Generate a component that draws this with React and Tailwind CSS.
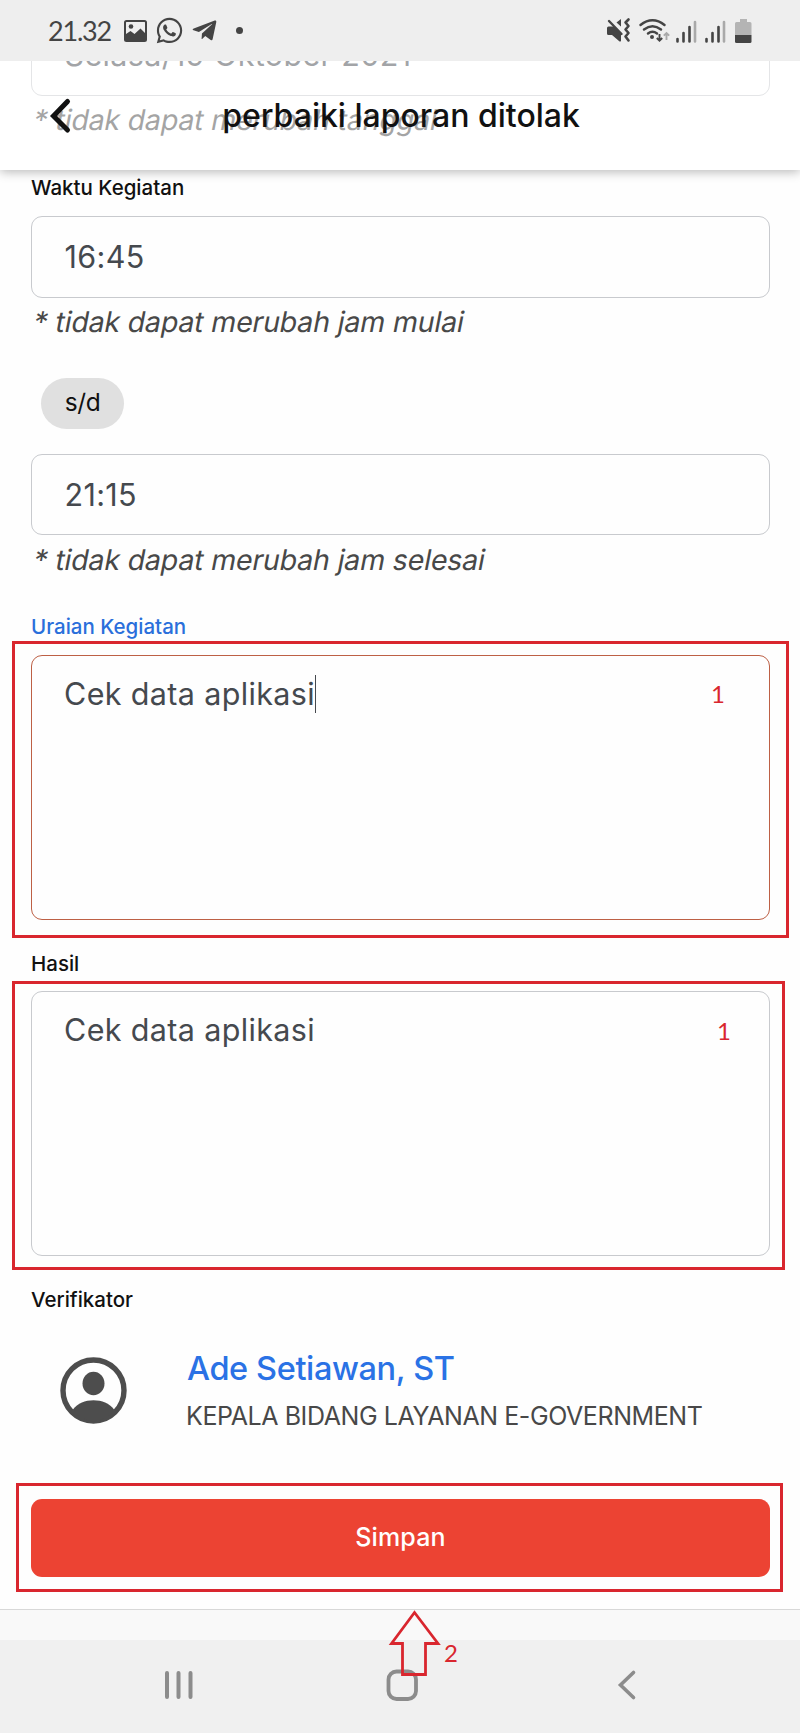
import { FaWhatsapp, FaTelegramPlane } from "react-icons/fa";

function StatusBar() {
  return (
    <div className="relative z-20 flex h-[61px] shrink-0 items-center justify-between bg-[#eeeeee] pl-[48px] pr-[40px] text-[#444444]">
      <div className="flex items-center">
        <span className="w-[76px] font-['Lato',sans-serif] text-[27px] leading-[32px] tracking-[-1.2px]">21.32</span>
        <svg className="h-[22px] w-[23px]" viewBox="0 0 23 22">
          <rect x="1" y="1" width="21" height="20" rx="1.5" fill="none" stroke="#444444" strokeWidth="2" />
          <circle cx="7" cy="6.5" r="2.3" fill="#444444" />
          <path d="M2 14l4.500-3 4 3 6-5.500L21 13v7H2z" fill="#444444" />
        </svg>
        <FaWhatsapp className="ml-[8px] h-[29px] w-[29px]" />
        <FaTelegramPlane className="ml-[7px] h-[27px] w-[27px]" />
        <span className="ml-[18px] h-[7px] w-[7px] rounded-full bg-[#444444]" />
      </div>
      <svg className="h-[61px] w-[160px]" viewBox="600 0 160 61" fill="none">
        <path d="M607 28q0-1.500 1.500-1.500h4.500l8-3.500v18q-1 1-2 0l-7-6h-3.500q-1.500 0-1.500-1.500z" fill="#444444" />
        <path d="M610 18.500l13 13.500" stroke="#eeeeee" strokeWidth="5" />
        <path d="M609 21l12.500 13" stroke="#444444" strokeWidth="2.400" strokeLinecap="round" />
        <path d="M616.500 22.500l4.500-3.500v7.500z" fill="#444444" />
        <path d="M628.500 19.500l-3 3 3 3.500-3 3.500 3 3.500-3 3.500 3 4" stroke="#444444" strokeWidth="2.600" strokeLinejoin="round" strokeLinecap="round" />
        <path d="M640.500 25q12-9.500 24 0" stroke="#444444" strokeWidth="2.500" strokeLinecap="round" />
        <path d="M644 29.500q8.500-6.500 17 0" stroke="#444444" strokeWidth="2.500" strokeLinecap="round" />
        <path d="M648 33.500q4.500-3.500 9 0" stroke="#444444" strokeWidth="2.500" strokeLinecap="round" />
        <circle cx="652" cy="37" r="2" fill="#444444" />
        <path d="M659.500 34v6.500m-2.700-2.500l2.700 2.700 2.700-2.700" stroke="#444444" strokeWidth="1.900" />
        <path d="M666.500 40v-7m-2.700 2.700l2.700-2.700 2.700 2.700" stroke="#a9a9a9" strokeWidth="1.900" />
        <path d="M677.500 39v2.500M683.500 33v8.500M689.500 27v14.500M706.500 39v2.500M712.500 33v8.500M718.500 27v14.500" stroke="#444444" strokeWidth="2.600" strokeLinecap="round" />
        <path d="M695 22v19.500M724 22v19.500" stroke="#a9a9a9" strokeWidth="2.600" strokeLinecap="round" />
        <path d="M740 19h7v3h3q1.500 0 1.500 1.500V35h-16.500V23.500q0-1.500 1.500-1.500h3.500z" fill="#b4b4b4" />
        <path d="M735 35h16.500v6.500q0 1.500-1.500 1.500h-13.500q-1.500 0-1.500-1.500z" fill="#444444" />
      </svg>
    </div>
  );
}

function Header() {
  return (
    <header className="absolute left-0 top-[61px] z-10 flex h-[109px] w-full items-center justify-center bg-white/50 shadow-[0_2px_10px_rgba(0,0,0,0.28)]">
      <svg className="absolute left-[48px] top-[36px] h-[38px] w-[26px]" viewBox="0 0 26 38" fill="none">
        <path d="M19.500 4.500L5.500 19l14 14" stroke="#111111" strokeWidth="5" strokeLinecap="round" strokeLinejoin="miter" />
      </svg>
      <h1 className="whitespace-nowrap pl-[2px] text-[32px] font-[470] leading-[40px] text-[#111111]">perbaiki laporan ditolak</h1>
    </header>
  );
}

function Label({ className, children }) {
  return <div className={"h-[30px] whitespace-nowrap text-[20.5px] font-[450] leading-[30px] " + className}>{children}</div>;
}

function Field({ className, children }) {
  return (
    <div className={"flex items-center rounded-[11px] border border-[#c8cace] pl-[32.5px] text-[30.5px] tracking-[0.35px] text-[#45494e] " + className}>
      {children}
    </div>
  );
}

function Hint({ className, children }) {
  return (
    <div className={"whitespace-nowrap pl-[3px] text-[28.5px] tracking-[-0.17px] text-[#484848] " + className}>
      <span className="inline-block -skew-x-[11deg]">{children}</span>
    </div>
  );
}

function Area({ className, children }) {
  return (
    <div className={"flex h-[265px] items-start rounded-[11px] border pl-[32px] pt-[18px] text-[30.5px] leading-[40px] tracking-[0.35px] text-[#45494e] " + className}>
      {children}
    </div>
  );
}

export default function App() {
  return (
    <div className="relative flex h-[1733px] w-[800px] flex-col overflow-hidden bg-white font-['Inter',sans-serif]">
      <StatusBar />
      <Header />

      <main className="h-[1548px] shrink-0 overflow-hidden bg-[#fefefe] pl-[31px] pr-[30px]">
        <div className="-mt-[47px] flex flex-col">
          <Field className="h-[82px]">Selasa/19 Oktober 2021</Field>
          <Hint className="h-[48px] leading-[48px]">* tidak dapat merubah tanggal</Hint>

          <Label className="mt-[29px] text-[#111111]">Waktu Kegiatan</Label>
          <Field className="mt-[13px] h-[82px]">16:45</Field>
          <Hint className="h-[48px] leading-[48px]">* tidak dapat merubah jam mulai</Hint>
          <div className="ml-[10px] mt-[32px] flex h-[51px] w-[83px] items-center justify-center rounded-full bg-[#e0e0e0] pb-[2px] text-[24.5px] tracking-[-0.4px] text-[#111111]">s/d</div>
          <Field className="mt-[25px] h-[81px]">21:15</Field>
          <Hint className="h-[50px] leading-[49px]">* tidak dapat merubah jam selesai</Hint>

          <Label className="mt-[27px] text-[#2a6fdb]">Uraian Kegiatan</Label>
          <Area className="mt-[13px] border-[#bd6045]">
            Cek data aplikasi<span className="mt-[1px] h-[38px] w-[1.5px] bg-[#45494e]" />
          </Area>

          <Label className="mt-[29px] text-[#111111]">Hasil</Label>
          <Area className="mt-[12px] border-[#c8cace]">Cek data aplikasi</Area>

          <Label className="mt-[29px] text-[#111111]">Verifikator</Label>
          <div className="mt-[31px] flex h-[94px] pl-[29px]">
            <svg className="mt-[10.5px] h-[67px] w-[67px] shrink-0" viewBox="0 0 67 67">
              <circle cx="33.500" cy="33.500" r="30.500" fill="none" stroke="#4d4d4d" strokeWidth="5.400" />
              <ellipse cx="33.500" cy="26.500" rx="11" ry="11.700" fill="#4d4d4d" />
              <path d="M12.500 53C18 46 25 43.300 33.500 43.300S49 46 54.500 53A31.500 31.500 0 0 1 33.500 64.500A31.500 31.500 0 0 1 12.500 53z" fill="#4d4d4d" />
            </svg>
            <div className="ml-[60px] whitespace-nowrap">
              <div className="text-[32.5px] font-[470] leading-[46px] tracking-[-0.38px] text-[#2a72e5]">Ade Setiawan, ST</div>
              <div className="-ml-[1px] text-[25px] leading-[48px] tracking-[-0.42px] text-[#484848]">KEPALA BIDANG LAYANAN E-GOVERNMENT</div>
            </div>
          </div>

          <button className="mt-[59px] h-[78px] w-full rounded-[11px] bg-[#ec4333] text-[25px] font-[470] tracking-[0.15px] text-white">Simpan</button>
        </div>
      </main>

      <div className="h-[31px] shrink-0 border-t border-[#d8d8d8] bg-[#f9f9f9]" />
      <nav className="flex h-[93px] shrink-0 items-center bg-[#f0f0f0] pl-[164px] pb-[4px]">
        <svg className="h-[32px] w-[30px]" viewBox="0 0 30 32">
          <path d="M3 4v24M14.500 4v24M26.500 4v24" stroke="#8c8c8c" strokeWidth="4" strokeLinecap="round" />
        </svg>
        <svg className="ml-[192px] h-[32px] w-[32px]" viewBox="0 0 32 32">
          <rect x="2.500" y="2.500" width="27.500" height="27.500" rx="8" fill="none" stroke="#8c8c8c" strokeWidth="3.800" />
        </svg>
        <svg className="ml-[199px] h-[32px] w-[20px]" viewBox="0 0 20 32">
          <path d="M16.500 3.500L3.500 16l13 12.500" fill="none" stroke="#8c8c8c" strokeWidth="3.600" strokeLinecap="round" />
        </svg>
      </nav>

      <div className="absolute left-[12px] top-[641px] h-[297px] w-[777px] border-[3px] border-[#d9262e]" />
      <div className="absolute left-[12px] top-[981px] h-[289px] w-[773px] border-[3px] border-[#d9262e]" />
      <div className="absolute left-[16px] top-[1483px] h-[109px] w-[767px] border-[3px] border-[#d9262e]" />
      <span className="absolute left-[711px] top-[678px] font-['Lato',sans-serif] text-[24px] leading-[32px] text-[#d9262e]">1</span>
      <span className="absolute left-[717px] top-[1015px] font-['Lato',sans-serif] text-[24px] leading-[32px] text-[#d9262e]">1</span>
      <span className="absolute left-[444px] top-[1637px] font-['Lato',sans-serif] text-[24px] leading-[32px] text-[#d9262e]">2</span>
      <svg className="absolute left-[388px] top-[1608px] h-[70px] w-[54px]" viewBox="388 1608 54 70">
        <path d="M414.500 1612.500L438 1643.500H425.500V1674.500H402.500V1643.500H391.500z" fill="none" stroke="#d9262e" strokeWidth="2.800" />
      </svg>
    </div>
  );
}
